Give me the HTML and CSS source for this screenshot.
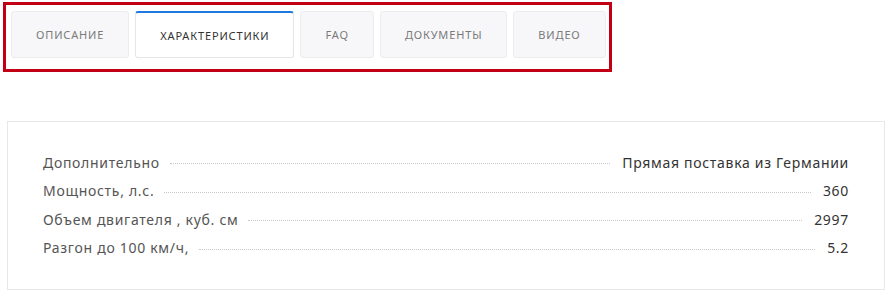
FILE: index.html
```html
<!DOCTYPE html>
<html lang="ru">
<head>
  <meta charset="UTF-8" />
  <meta name="viewport" content="width=device-width, initial-scale=1.0" />
  <title>Характеристики</title>
  <link rel="stylesheet" href="styles.css">
</head>
<body>
  <!-- Tabs -->
  <div class="tabs">
    <div class="tab">Описание</div>
    <div class="tab active">Характеристики</div>
    <div class="tab">FAQ</div>
    <div class="tab">Документы</div>
    <div class="tab">Видео</div>
  </div>

  <!-- Specs -->
  <div class="specs">
    <div class="spec-row">
      <span class="spec-name">Дополнительно</span>
      <span class="spec-dots"></span>
      <span class="spec-value">Прямая поставка из Германии</span>
    </div>
    <div class="spec-row">
      <span class="spec-name">Мощность, л.с.</span>
      <span class="spec-dots"></span>
      <span class="spec-value">360</span>
    </div>
    <div class="spec-row">
      <span class="spec-name">Объем двигателя , куб. см</span>
      <span class="spec-dots"></span>
      <span class="spec-value">2997</span>
    </div>
    <div class="spec-row">
      <span class="spec-name">Разгон до 100 км/ч,</span>
      <span class="spec-dots"></span>
      <span class="spec-value">5.2</span>
    </div>
  </div>
</body>
</html>
```

FILE: styles.css
```css
/* Global */
body {
  margin: 0;
  background: #fff;
  font-family: "Noto Sans", Arial, sans-serif;
  color: #333;
}
/* Tabs (highlighted with red frame) */
.tabs {
  display: inline-flex;
  gap: 6px;
  margin: 2px 0 0 3px;
  padding: 6px 3px 11px 5px;
  border: 3px solid #c10016;
}
.tab {
  height: 45px;
  display: flex;
  align-items: center;
  padding: 0 24px;
  background: #f7f7f9;
  border: 1px solid #ececef;
  border-radius: 3px;
  font-size: 11px;
  letter-spacing: 0.85px;
  text-transform: uppercase;
  color: #7a7a7a;
}
.tab.active {
  background: #fff;
  color: #333;
  border-color: #e6e6e6;
  border-top: 2px solid #1e78e0;
  height: 44px;
}
/* Specs box */
.specs {
  margin: 49px 9px 0 7px;
  padding: 26px 35px 27px;
  border: 1px solid #e8e8e8;
}
.spec-row {
  display: flex;
  align-items: center;
  height: 28.5px;
  font-size: 14px;
  letter-spacing: 0.7px;
}
.spec-name {
  color: #555;
}
.spec-dots {
  flex: 1;
  margin: 3px 12px 0 10px;
  border-top: 1px dotted #c8c8c8;
}
.spec-value {
  color: #333;
}
```
